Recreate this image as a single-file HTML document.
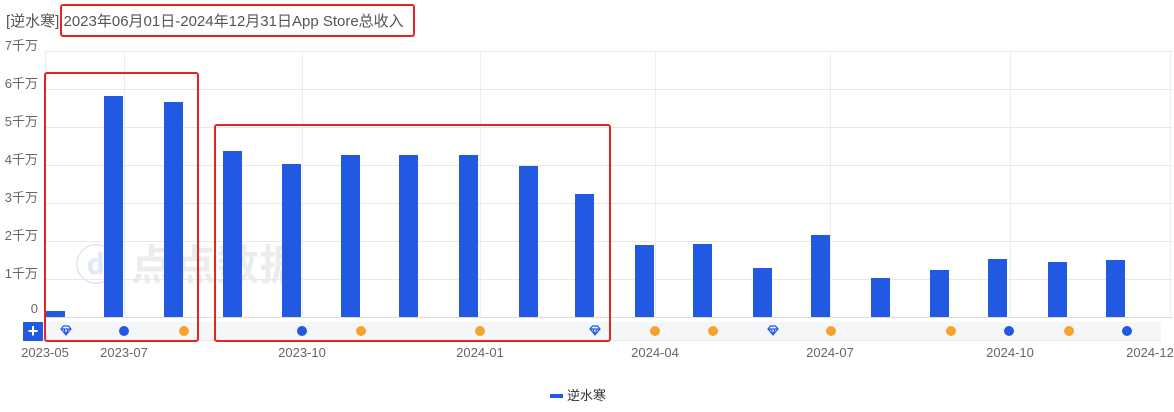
<!DOCTYPE html><html><head><meta charset="utf-8"><style>
body{margin:0;width:1174px;height:412px;background:#fff;position:relative;overflow:hidden;font-family:"Liberation Sans","Noto Sans CJK SC",sans-serif;}
.a{position:absolute}
.gl{position:absolute;left:45px;width:1128px;height:1px;background:#e8e8e8}
.vl{position:absolute;top:51px;height:266px;width:1px;background:#ececec}
.yl{position:absolute;left:0;width:38px;text-align:right;font-size:13px;color:#666}
.bar{position:absolute;width:19px;background:#2259e3}
.xl{position:absolute;top:345px;font-size:13px;color:#666;transform:translateX(-50%);white-space:nowrap}
.dot{position:absolute;top:326px;width:10px;height:10px;border-radius:50%}
.o{background:#f5a22f}.b{background:#2259e3}
.rb{position:absolute;border:2px solid #e8231f;border-radius:3px}
</style></head><body>
<div class="a" style="left:6px;top:10px;font-size:15px;color:#555;white-space:nowrap">[逆水寒] 2023年06月01日-2024年12月31日App Store总收入</div>
<div class="a" style="left:75px;top:232px;font-size:42px;font-weight:bold;color:#ebecee;letter-spacing:1px;white-space:nowrap"><span style="color:#e2e8f7">ⓓ</span> 点点数据</div>
<div class="gl" style="top:51px"></div><div class="gl" style="top:89px"></div><div class="gl" style="top:127px"></div><div class="gl" style="top:165px"></div><div class="gl" style="top:203px"></div><div class="gl" style="top:241px"></div><div class="gl" style="top:279px"></div><div class="gl" style="top:317px;background:#ddd"></div>
<div class="vl" style="left:45px"></div><div class="vl" style="left:124px"></div><div class="vl" style="left:302px"></div><div class="vl" style="left:480px"></div><div class="vl" style="left:655px"></div><div class="vl" style="left:830px"></div><div class="vl" style="left:1010px"></div><div class="vl" style="left:1170px"></div>
<div class="yl" style="top:35px">7千万</div><div class="yl" style="top:73px">6千万</div><div class="yl" style="top:111px">5千万</div><div class="yl" style="top:149px">4千万</div><div class="yl" style="top:187px">3千万</div><div class="yl" style="top:225px">2千万</div><div class="yl" style="top:263px">1千万</div><div class="yl" style="top:301px">0</div>
<div class="bar" style="left:46px;top:311px;height:6px"></div>
<div class="bar" style="left:104px;top:96px;height:221px"></div>
<div class="bar" style="left:164px;top:102px;height:215px"></div>
<div class="bar" style="left:223px;top:151px;height:166px"></div>
<div class="bar" style="left:282px;top:164px;height:153px"></div>
<div class="bar" style="left:341px;top:155px;height:162px"></div>
<div class="bar" style="left:399px;top:155px;height:162px"></div>
<div class="bar" style="left:459px;top:155px;height:162px"></div>
<div class="bar" style="left:519px;top:166px;height:151px"></div>
<div class="bar" style="left:575px;top:194px;height:123px"></div>
<div class="bar" style="left:635px;top:245px;height:72px"></div>
<div class="bar" style="left:693px;top:244px;height:73px"></div>
<div class="bar" style="left:753px;top:268px;height:49px"></div>
<div class="bar" style="left:811px;top:235px;height:82px"></div>
<div class="bar" style="left:871px;top:278px;height:39px"></div>
<div class="bar" style="left:930px;top:270px;height:47px"></div>
<div class="bar" style="left:988px;top:259px;height:58px"></div>
<div class="bar" style="left:1048px;top:262px;height:55px"></div>
<div class="bar" style="left:1106px;top:260px;height:57px"></div>
<div class="a" style="left:45px;top:322px;width:1116px;height:18px;background:#f5f6f8;border-bottom:1px solid #e6e8ec"></div>
<div class="a" style="left:23px;top:322px;width:20px;height:19px;background:#2259e3;color:#fff;font-size:18px;font-weight:bold;line-height:19px;text-align:center">+</div>
<svg class="a" style="left:60px;top:325px" width="12" height="11"><path d="M1 4 L3.5 1 H8.5 L11 4 L6 10 Z M1 4 H11 M6 10 L4 4 M6 10 L8 4" fill="none" stroke="#2259e3" stroke-width="1.2"/></svg>
<svg class="a" style="left:589px;top:325px" width="12" height="11"><path d="M1 4 L3.5 1 H8.5 L11 4 L6 10 Z M1 4 H11 M6 10 L4 4 M6 10 L8 4" fill="none" stroke="#2259e3" stroke-width="1.2"/></svg>
<svg class="a" style="left:767px;top:325px" width="12" height="11"><path d="M1 4 L3.5 1 H8.5 L11 4 L6 10 Z M1 4 H11 M6 10 L4 4 M6 10 L8 4" fill="none" stroke="#2259e3" stroke-width="1.2"/></svg>
<div class="dot b" style="left:119px"></div><div class="dot o" style="left:179px"></div><div class="dot b" style="left:297px"></div><div class="dot o" style="left:356px"></div><div class="dot o" style="left:475px"></div><div class="dot o" style="left:650px"></div><div class="dot o" style="left:708px"></div><div class="dot o" style="left:826px"></div><div class="dot o" style="left:946px"></div><div class="dot b" style="left:1004px"></div><div class="dot o" style="left:1064px"></div><div class="dot b" style="left:1122px"></div>
<div class="xl" style="left:45px">2023-05</div><div class="xl" style="left:124px">2023-07</div><div class="xl" style="left:302px">2023-10</div><div class="xl" style="left:480px">2024-01</div><div class="xl" style="left:655px">2024-04</div><div class="xl" style="left:830px">2024-07</div><div class="xl" style="left:1010px">2024-10</div><div class="xl" style="left:1150px">2024-12</div>
<div class="a" style="left:550px;top:394px;width:13px;height:4px;background:#2259e3"></div>
<div class="a" style="left:567px;top:385px;font-size:13px;color:#333">逆水寒</div>
<div class="rb" style="left:60px;top:4px;width:351px;height:29px"></div>
<div class="rb" style="left:44px;top:72px;width:151px;height:266px"></div>
<div class="rb" style="left:214px;top:124px;width:393px;height:214px"></div>
</body></html>
